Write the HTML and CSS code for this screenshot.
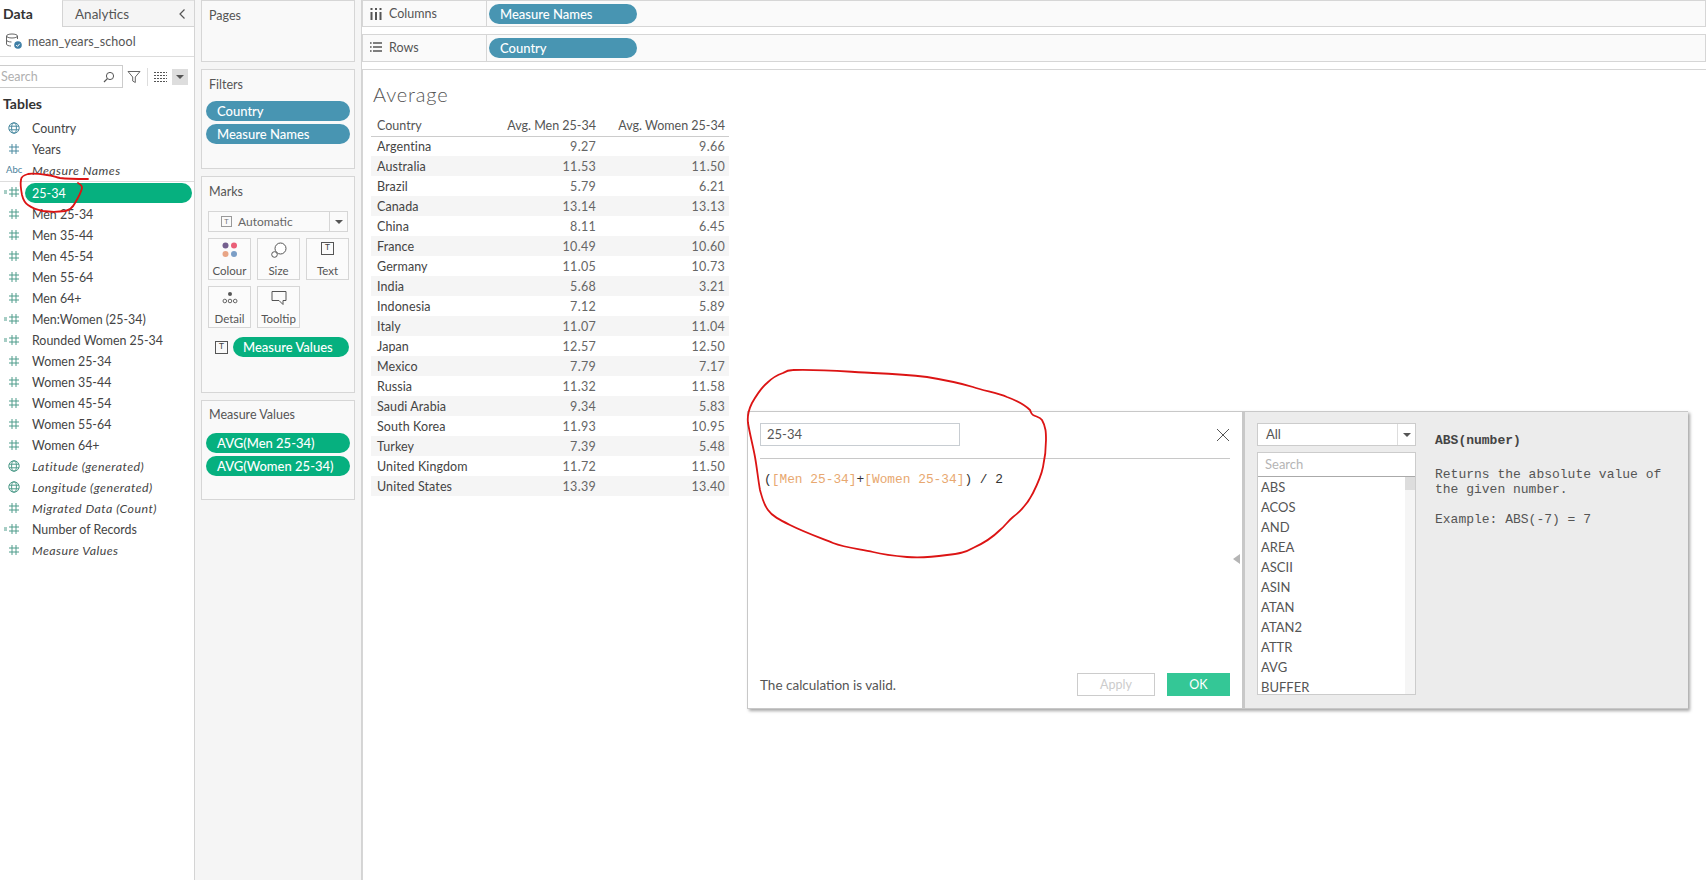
FILE: index.html
```html
<!DOCTYPE html>
<html lang="en">
<head>
  <meta charset="UTF-8" />
  <title>Average</title>
  <link rel="stylesheet" href="styles.css">
</head>
<body>
  <svg class="defs" width="0" height="0">
    <symbol id="hash" viewBox="0 0 12 12">
      <path d="M4 1v10M8 1v10M1 4h10M1 8h10" fill="none" stroke="currentColor" stroke-width="1"/>
    </symbol>
    <symbol id="calc" viewBox="0 0 16 12">
      <path d="M8 1v10M12 1v10M5 4h10M5 8h10" fill="none" stroke="currentColor" stroke-width="1"/>
      <path d="M0 5h3M0 7h3" fill="none" stroke="currentColor" stroke-width="1"/>
    </symbol>
    <symbol id="globe" viewBox="0 0 12 12">
      <g fill="none" stroke="currentColor" stroke-width="1">
        <circle cx="6" cy="6" r="5.2"/>
        <ellipse cx="6" cy="6" rx="2.4" ry="5.2"/>
        <path d="M1 4.2h10M1 7.8h10"/>
      </g>
    </symbol>
  </svg>

  <div class="page">
    <aside class="sidebar">
      <div class="tabs">
        <div class="tab active">Data</div>
        <div class="tab">Analytics<span class="chev">
          <svg width="8" height="12" viewBox="0 0 8 12"><path d="M6.5 1.5L2 6l4.5 4.5" fill="none" stroke="#555" stroke-width="1.2"/></svg>
        </span></div>
      </div>
      <div class="source">
        <svg width="18" height="17" viewBox="0 0 18 17">
          <g fill="none" stroke="#666" stroke-width="1">
            <ellipse cx="7" cy="3" rx="5.5" ry="2"/>
            <path d="M1.5 3v8c0 1.2 2 2 4.5 2M12.5 3v3M1.5 7c0 1.2 2.5 2 5 2"/>
          </g>
          <circle cx="13" cy="12" r="3.8" fill="#3f7fa6"/>
          <path d="M11.2 12l1.3 1.4 2.2-2.6" fill="none" stroke="#fff" stroke-width="1"/>
        </svg>
        <span>mean_years_school</span>
      </div>
      <div class="tools">
        <div class="search">
          <span>Search</span>
          <svg width="12" height="12" viewBox="0 0 12 12"><circle cx="7" cy="5" r="3.6" fill="none" stroke="#555"/><path d="M4.4 7.6L1 11" stroke="#555" stroke-width="1.2"/></svg>
        </div>
        <svg class="funnel" width="14" height="14" viewBox="0 0 14 14"><path d="M1 1.5h12L8.3 7v5.5L5.7 11V7z" fill="none" stroke="#666"/></svg>
        <span class="tool-sep"></span>
        <svg class="view-grid" width="13" height="10" viewBox="0 0 13 10"><path d="M0 .5h13M0 3.5h13M0 6.5h13M0 9.5h13" stroke="#555" stroke-dasharray="2 1"/></svg>
        <span class="tool-drop"><i class="caret"></i></span>
      </div>
      <h3 class="tables-title">Tables</h3>
      <ul class="fields">
        <li><svg class="ico blue"><use href="#globe"/></svg>Country</li>
        <li><svg class="ico blue"><use href="#hash"/></svg>Years</li>
        <li class="it"><span class="abc">Abc</span>Measure Names</li>
        <li class="selected"><svg class="ico-calc"><use href="#calc"/></svg><span class="field-pill">25-34</span></li>
        <li><svg class="ico"><use href="#hash"/></svg>Men 25-34</li>
        <li><svg class="ico"><use href="#hash"/></svg>Men 35-44</li>
        <li><svg class="ico"><use href="#hash"/></svg>Men 45-54</li>
        <li><svg class="ico"><use href="#hash"/></svg>Men 55-64</li>
        <li><svg class="ico"><use href="#hash"/></svg>Men 64+</li>
        <li><svg class="ico-calc"><use href="#calc"/></svg>Men:Women (25-34)</li>
        <li><svg class="ico-calc"><use href="#calc"/></svg>Rounded Women 25-34</li>
        <li><svg class="ico"><use href="#hash"/></svg>Women 25-34</li>
        <li><svg class="ico"><use href="#hash"/></svg>Women 35-44</li>
        <li><svg class="ico"><use href="#hash"/></svg>Women 45-54</li>
        <li><svg class="ico"><use href="#hash"/></svg>Women 55-64</li>
        <li><svg class="ico"><use href="#hash"/></svg>Women 64+</li>
        <li class="it"><svg class="ico"><use href="#globe"/></svg>Latitude (generated)</li>
        <li class="it"><svg class="ico"><use href="#globe"/></svg>Longitude (generated)</li>
        <li class="it"><svg class="ico"><use href="#hash"/></svg>Migrated Data (Count)</li>
        <li><svg class="ico-calc"><use href="#calc"/></svg>Number of Records</li>
        <li class="it"><svg class="ico"><use href="#hash"/></svg>Measure Values</li>
      </ul>
    </aside>

    <section class="cards">
      <div class="card pages"><h4>Pages</h4></div>
      <div class="card filters">
        <h4>Filters</h4>
        <div class="pill blue-pill">Country</div>
        <div class="pill blue-pill">Measure Names</div>
      </div>
      <div class="card marks">
        <h4>Marks</h4>
        <div class="mark-select">
          <span class="t-icon faint">T</span>
          <span class="mark-type">Automatic</span>
          <span class="mark-drop"><i class="caret"></i></span>
        </div>
        <div class="mark-grid">
          <div class="mark-btn">
            <svg width="16" height="16" viewBox="0 0 16 16"><circle cx="3.5" cy="3.5" r="3" fill="#75608f"/><circle cx="12" cy="3.5" r="3" fill="#ea5f78"/><circle cx="3.5" cy="12" r="3" fill="#e8a586"/><circle cx="12" cy="12" r="3" fill="#7b9ec6"/></svg>
            <span>Colour</span>
          </div>
          <div class="mark-btn">
            <svg width="16" height="16" viewBox="0 0 16 16"><circle cx="9.5" cy="6.5" r="5.5" fill="#fff" stroke="#555"/><circle cx="3.5" cy="12.5" r="2.8" fill="#fff" stroke="#555"/></svg>
            <span>Size</span>
          </div>
          <div class="mark-btn">
            <span class="t-icon">T</span>
            <span>Text</span>
          </div>
          <div class="mark-btn">
            <svg width="16" height="16" viewBox="0 0 16 16"><circle cx="8" cy="4" r="2" fill="#555"/><g fill="none" stroke="#555" stroke-width=".9"><circle cx="2.8" cy="11" r="1.8"/><circle cx="8" cy="11" r="1.8"/><circle cx="13.2" cy="11" r="1.8"/></g></svg>
            <span>Detail</span>
          </div>
          <div class="mark-btn">
            <svg width="16" height="16" viewBox="0 0 16 16"><path d="M1 1.5h14v9h-3v4l-4-4H1z" fill="none" stroke="#555"/></svg>
            <span>Tooltip</span>
          </div>
        </div>
        <div class="mark-field">
          <span class="t-icon">T</span>
          <div class="pill green-pill centered">Measure Values</div>
        </div>
      </div>
      <div class="card values">
        <h4>Measure Values</h4>
        <div class="pill green-pill">AVG(Men 25-34)</div>
        <div class="pill green-pill">AVG(Women 25-34)</div>
      </div>
    </section>

    <main class="main">
      <div class="shelf">
        <div class="shelf-label">
          <svg width="12" height="12" viewBox="0 0 12 12"><path d="M1.5 4v8M6 4v8M10.5 4v8" stroke="#555" stroke-width="2"/><path d="M1.5 0v2M6 0v2M10.5 0v2" stroke="#555" stroke-width="2"/></svg>
          Columns
        </div>
        <div class="pill blue-pill shelf-pill">Measure Names</div>
      </div>
      <div class="shelf">
        <div class="shelf-label">
          <svg width="12" height="12" viewBox="0 0 12 12"><path d="M3 2h9M3 6h9M3 10h9M0 2h1.6M0 6h1.6M0 10h1.6" stroke="#555" stroke-width="1.6"/></svg>
          Rows
        </div>
        <div class="pill blue-pill shelf-pill">Country</div>
      </div>
      <div class="view">
        <h1>Average</h1>
        <table class="crosstab">
          <thead>
            <tr><th>Country</th><th>Avg. Men 25-34</th><th>Avg. Women 25-34</th></tr>
          </thead>
          <tbody>
            <tr><td>Argentina</td><td>9.27</td><td>9.66</td></tr>
            <tr><td>Australia</td><td>11.53</td><td>11.50</td></tr>
            <tr><td>Brazil</td><td>5.79</td><td>6.21</td></tr>
            <tr><td>Canada</td><td>13.14</td><td>13.13</td></tr>
            <tr><td>China</td><td>8.11</td><td>6.45</td></tr>
            <tr><td>France</td><td>10.49</td><td>10.60</td></tr>
            <tr><td>Germany</td><td>11.05</td><td>10.73</td></tr>
            <tr><td>India</td><td>5.68</td><td>3.21</td></tr>
            <tr><td>Indonesia</td><td>7.12</td><td>5.89</td></tr>
            <tr><td>Italy</td><td>11.07</td><td>11.04</td></tr>
            <tr><td>Japan</td><td>12.57</td><td>12.50</td></tr>
            <tr><td>Mexico</td><td>7.79</td><td>7.17</td></tr>
            <tr><td>Russia</td><td>11.32</td><td>11.58</td></tr>
            <tr><td>Saudi Arabia</td><td>9.34</td><td>5.83</td></tr>
            <tr><td>South Korea</td><td>11.93</td><td>10.95</td></tr>
            <tr><td>Turkey</td><td>7.39</td><td>5.48</td></tr>
            <tr><td>United Kingdom</td><td>11.72</td><td>11.50</td></tr>
            <tr><td>United States</td><td>13.39</td><td>13.40</td></tr>
          </tbody>
        </table>
      </div>
    </main>

    <div class="calc-dialog">
      <div class="calc-left">
        <div class="calc-head">
          <div class="calc-name">25-34</div>
          <svg class="calc-close" width="14" height="14" viewBox="0 0 14 14"><path d="M1 1l12 12M13 1L1 13" stroke="#555" stroke-width="1"/></svg>
        </div>
        <div class="formula">(<span class="ref">[Men 25-34]</span>+<span class="ref">[Women 25-34]</span>) / 2</div>
        <div class="calc-foot">
          <span class="valid">The calculation is valid.</span>
          <button class="btn-apply">Apply</button>
          <button class="btn-ok">OK</button>
        </div>
        <i class="collapse"></i>
      </div>
      <div class="calc-right">
        <div class="fn-col">
          <div class="fn-select">All<span class="fn-drop"><i class="caret"></i></span></div>
          <div class="fn-box">
            <div class="fn-search">Search</div>
            <div class="fn-listwrap">
              <ul class="fn-list">
                <li>ABS</li>
                <li>ACOS</li>
                <li>AND</li>
                <li>AREA</li>
                <li>ASCII</li>
                <li>ASIN</li>
                <li>ATAN</li>
                <li>ATAN2</li>
                <li>ATTR</li>
                <li>AVG</li>
                <li>BUFFER</li>
              </ul>
              <div class="fn-track"><div class="fn-thumb"></div></div>
            </div>
          </div>
        </div>
        <div class="fn-help">
          <p class="fn-sig">ABS(number)</p>
          <p>Returns the absolute value of<br>the given number.</p>
          <p>Example: ABS(-7) = 7</p>
        </div>
      </div>
    </div>

    <!-- hand drawn red marks on top of the screenshot -->
    <svg class="scribble" width="1706" height="880" viewBox="0 0 1706 880">
      <g fill="none" stroke="#dc1414" stroke-width="1.8" stroke-linecap="round" stroke-linejoin="round">
        <path d="M793 370C820 369 850 372 873 373C895 374 910 375 927 377C945 380 960 383 973 387C985 391 997 393 1007 397C1018 401 1025 405 1030 410C1031 412 1031 414 1033 415C1037 417 1040 417 1042 420C1046 427 1046 433 1046 440C1046 450 1045 458 1043 467C1041 477 1037 485 1033 493C1028 503 1021 511 1013 517C1008 521 1005 526 1000 530C992 538 982 544 973 548C965 553 956 554 947 555C933 557 920 558 907 557C895 556 885 555 873 552C860 549 846 548 833 543C818 537 804 532 790 525C780 520 772 516 768 510C763 503 762 497 760 490C758 479 757 468 755 457C753 446 750 435 748 423C747 415 749 409 752 403C756 396 761 388 767 383C772 378 777 375 783 373C786 371 790 370 793 370"/>
        <path d="M88 179C78 179 68 179 60 178C55 177 52 175 47 175C40 174 33 173 28 174C24 175 21 177 21 180C20 185 21 190 22 195C23 199 25 203 28 205C32 208 38 210 43 211C50 212 58 212 65 211C70 210 73 207 75 203C78 198 81 193 82 188C82 186 80 184 78 183"/>
      </g>
    </svg>
  </div>
</body>
</html>
```

FILE: styles.css
```css
* {
  box-sizing: border-box;
}
body {
  margin: 0;
  font-family: Lato, "Open Sans", sans-serif;
  font-size: 13px;
  color: #444;
  background: #fff;
}
.defs {
  position: absolute;
}
ul {
  list-style: none;
  margin: 0;
  padding: 0;
}
.page {
  position: relative;
  display: flex;
  width: 1706px;
  height: 880px;
  overflow: hidden;
}
.caret {
  display: block;
  width: 0;
  height: 0;
  border-left: 4px solid transparent;
  border-right: 4px solid transparent;
  border-top: 4px solid #555;
}

/* data pane */
.sidebar {
  width: 195px;
  flex: none;
  border-right: 1px solid #d4d4d4;
}
.tabs {
  display: flex;
  height: 27px;
}
.tab {
  display: flex;
  align-items: center;
  padding-left: 12px;
  flex: 1;
  font-size: 13.5px;
  color: #555;
  background: #f5f5f5;
  border-left: 1px solid #d4d4d4;
  border-bottom: 1px solid #d4d4d4;
  border-top: 1px solid #e0e0e0;
}
.tab.active {
  flex: none;
  width: 62px;
  padding-left: 3px;
  font-size: 14px;
  font-weight: 700;
  color: #333;
  background: #fff;
  border: 0;
}
.chev {
  margin-left: auto;
  margin-right: 8px;
  display: flex;
}
.source {
  display: flex;
  align-items: center;
  gap: 5px;
  height: 30px;
  padding-left: 5px;
  border-bottom: 1px solid #ddd;
  font-size: 12.5px;
  letter-spacing: .1px;
  color: #555;
}
.tools {
  display: flex;
  align-items: center;
  height: 23px;
  margin-top: 8px;
}
.search {
  display: flex;
  align-items: center;
  justify-content: space-between;
  width: 123px;
  height: 23px;
  padding: 0 7px 0 1px;
  border: 1px solid #ccc;
  border-left: 0;
  color: #b0b0b0;
  font-size: 12.5px;
}
.funnel {
  margin-left: 4px;
}
.tool-sep {
  width: 1px;
  height: 18px;
  margin-left: 6px;
  background: #ddd;
}
.view-grid {
  margin-left: 6px;
}
.tool-drop {
  display: flex;
  align-items: center;
  justify-content: center;
  width: 16px;
  height: 16px;
  margin-left: 5px;
  background: #ddd;
}
.tables-title {
  margin: 4px 0 0;
  padding-left: 3px;
  height: 26px;
  line-height: 24px;
  font-size: 14px;
  font-weight: 700;
  color: #333;
}
.fields li {
  position: relative;
  display: flex;
  align-items: center;
  height: 21px;
  padding-left: 32px;
  font-size: 12.4px;
  color: #444;
}
.fields li.it {
  font-style: italic;
  letter-spacing: .45px;
}
.fields li.selected {
  height: 23px;
  border-top: 1px solid #ddd;
  padding-left: 25px;
}
.ico,
.ico-calc,
.abc {
  position: absolute;
  color: #4f9c8b;
}
.ico {
  left: 8px;
  top: 4px;
  width: 12px;
  height: 12px;
}
.ico.blue {
  color: #4a8aa0;
}
.ico-calc {
  left: 4px;
  top: 4px;
  width: 16px;
  height: 12px;
}
.abc {
  left: 6px;
  top: 4px;
  font-size: 9.5px;
  font-style: normal;
  letter-spacing: 0;
  color: #4a7f9b;
}
.field-pill {
  display: flex;
  align-items: center;
  width: 167px;
  height: 20px;
  padding-left: 7px;
  border-radius: 10px;
  color: #fff;
  background: #06b07f;
  font-size: 12.5px;
}

/* shelf cards */
.cards {
  width: 167px;
  flex: none;
  display: flex;
  flex-direction: column;
  gap: 7px;
  padding: 0 6px;
  background: #f5f5f5;
  border-right: 1px solid #d4d4d4;
}
.card {
  border: 1px solid #d6d6d6;
  background: #f9f9f9;
  padding: 0 4px;
}
.card h4 {
  margin: 0;
  padding-left: 3px;
  font-size: 12.5px;
  font-weight: 400;
  color: #555;
}
.pages {
  height: 62px;
  padding-top: 7px;
}
.filters {
  height: 100px;
}
.filters h4 {
  height: 31px;
  line-height: 16px;
  padding-top: 7px;
}
.marks {
  height: 217px;
}
.marks h4 {
  height: 34px;
  padding-top: 7px;
}
.values {
  height: 100px;
}
.values h4 {
  height: 32px;
  padding-top: 6px;
}
.pill {
  display: flex;
  align-items: center;
  height: 20px;
  padding-left: 11px;
  margin-bottom: 3px;
  border-radius: 10px;
  color: #fff;
  font-size: 13px;
  font-weight: 500;
}
.blue-pill {
  background: #4895b2;
}
.green-pill {
  background: #06b07f;
}
.pill.centered {
  flex: 1;
  margin: 0;
}
.mark-select {
  display: flex;
  align-items: center;
  height: 21px;
  margin: 0 2px;
  padding-left: 12px;
  border: 1px solid #d6d6d6;
  background: #fafafa;
  color: #666;
  font-size: 12px;
}
.mark-type {
  margin-left: 6px;
}
.mark-drop {
  display: flex;
  align-items: center;
  justify-content: center;
  width: 18px;
  height: 100%;
  margin-left: auto;
  border-left: 1px solid #d6d6d6;
}
.t-icon {
  display: inline-block;
  flex: none;
  width: 13px;
  height: 13px;
  line-height: 11px;
  text-align: center;
  font-family: "Liberation Mono", monospace;
  font-size: 9px;
  color: #444;
  border: 1px solid #555;
}
.t-icon.faint {
  color: #777;
  border-color: #999;
  width: 11px;
  height: 11px;
  line-height: 9px;
  font-size: 8px;
}
.mark-grid {
  display: grid;
  grid-template-columns: repeat(3, 43px);
  grid-auto-rows: 42px;
  gap: 6px 6px;
  margin: 6px 2px 0;
}
.mark-btn {
  display: flex;
  flex-direction: column;
  align-items: center;
  justify-content: space-between;
  padding: 3px 0 2px;
  border: 1px solid #d6d6d6;
  background: #fbfbfb;
  font-size: 11.5px;
  color: #555;
}
.mark-field {
  display: flex;
  align-items: center;
  gap: 5px;
  margin: 9px 0 0 9px;
  padding-right: 1px;
}
.mark-field .pill {
  padding-left: 10px;
}

/* main view */
.main {
  flex: 1;
  display: flex;
  flex-direction: column;
  gap: 7px;
}
.shelf {
  display: flex;
  align-items: center;
  height: 27px;
  border: 1px solid #d6d6d6;
  background: #fafafa;
}
.shelf + .shelf {
  height: 28px;
}
.shelf-label {
  display: flex;
  align-items: center;
  gap: 7px;
  width: 124px;
  height: 100%;
  padding-left: 7px;
  border-right: 1px solid #d6d6d6;
  font-size: 12.5px;
  color: #555;
}
.shelf + .shelf .shelf-label {
  padding-bottom: 2px;
}
.shelf-pill {
  width: 148px;
  margin: 0 0 0 2px;
}
.view {
  flex: 1;
  padding: 0 0 0 8px;
  border: 1px solid #d6d6d6;
  border-right: 0;
  border-bottom: 0;
}
.view h1 {
  margin: 10px 0 0 2px;
  height: 30px;
  line-height: 28px;
  font-size: 20px;
  font-weight: 300;
  letter-spacing: .85px;
  color: #555;
}
.crosstab {
  margin-top: 5px;
  width: 358px;
  border-collapse: collapse;
  table-layout: fixed;
  font-size: 12.5px;
}
.crosstab th {
  height: 21px;
  padding: 0 4px 0 6px;
  font-weight: 400;
  text-align: right;
  color: #555;
  border-bottom: 1px solid #ccc;
}
.crosstab th:nth-child(1) {
  width: 110px;
  text-align: left;
}
.crosstab th:nth-child(2) {
  width: 119px;
}
.crosstab td {
  height: 20px;
  padding: 0 4px 0 6px;
  text-align: right;
  color: #666;
  letter-spacing: .3px;
}
.crosstab td:first-child {
  text-align: left;
  color: #444;
  letter-spacing: .1px;
}
.crosstab tbody tr:nth-child(even) {
  background: #f5f5f5;
}

/* calculation editor */
.calc-dialog {
  position: absolute;
  left: 747px;
  top: 411px;
  display: flex;
  width: 941px;
  height: 298px;
  background: #fff;
  border: 1px solid #c8c8c8;
  border-right: 0;
  box-shadow: 2px 2px 3px rgba(0, 0, 0, .35);
}
.calc-left {
  position: relative;
  display: flex;
  flex-direction: column;
  width: 497px;
  padding: 12px 12px 12px 12px;
  border-right: 3px solid #c8c8c8;
}
.calc-head {
  display: flex;
  align-items: center;
  justify-content: space-between;
  height: 35px;
  padding: 0 0 13px;
  border-bottom: 1px solid #c8c8c8;
}
.calc-name {
  width: 200px;
  height: 23px;
  line-height: 21px;
  padding-left: 6px;
  border: 1px solid #c8cdd2;
  font-size: 13px;
  color: #555;
}
.formula {
  margin: 13px 0 0 4px;
  font-family: "Liberation Mono", monospace;
  font-size: 12.85px;
  line-height: 16px;
  color: #333;
}
.ref {
  color: #e8a870;
}
.calc-foot {
  display: flex;
  align-items: center;
  margin-top: auto;
}
.valid {
  font-size: 13.5px;
  color: #555;
  margin-right: auto;
}
.btn-apply,
.btn-ok {
  height: 23px;
  padding: 0;
  font-family: inherit;
  font-size: 12.5px;
}
.btn-apply {
  width: 78px;
  margin-right: 12px;
  background: #fff;
  color: #ccc;
  border: 1px solid #ccc;
}
.btn-ok {
  width: 63px;
  color: #fff;
  background: #34c796;
  border: 0;
}
.collapse {
  position: absolute;
  right: 2px;
  top: 142px;
  width: 0;
  height: 0;
  border-top: 5px solid transparent;
  border-bottom: 5px solid transparent;
  border-right: 7px solid #b5b5b5;
}
.calc-right {
  flex: 1;
  display: flex;
  padding: 11px 0 0 12px;
  background: #ececec;
}
.fn-col {
  width: 159px;
  flex: none;
}
.fn-select {
  position: relative;
  height: 23px;
  line-height: 21px;
  padding-left: 8px;
  background: #fff;
  border: 1px solid #ccc;
  font-size: 13px;
  color: #555;
}
.fn-drop {
  position: absolute;
  right: 0;
  top: 0;
  bottom: 0;
  width: 18px;
  display: flex;
  align-items: center;
  justify-content: center;
  border-left: 1px solid #ddd;
}
.fn-box {
  margin-top: 6px;
  height: 243px;
  background: #fff;
  border: 1px solid #ccc;
}
.fn-search {
  height: 24px;
  line-height: 23px;
  padding-left: 7px;
  border-bottom: 1px solid #aaa;
  color: #b5b5b5;
  font-size: 13px;
}
.fn-listwrap {
  display: flex;
  height: 217px;
  overflow: hidden;
}
.fn-list {
  flex: 1;
  padding-left: 3px;
}
.fn-list li {
  height: 20px;
  line-height: 20px;
  font-size: 13px;
  color: #555;
}
.fn-track {
  width: 10px;
  background: #f5f5f5;
}
.fn-thumb {
  height: 13px;
  background: #ddd;
}
.fn-help {
  padding: 10px 0 0 19px;
  font-family: "Liberation Mono", monospace;
  font-size: 13px;
  line-height: 15px;
  color: #555;
}
.fn-help p {
  margin: 0 0 15px;
}
.fn-help .fn-sig {
  margin-bottom: 19px;
  font-weight: 700;
  color: #444;
}
.scribble {
  position: absolute;
  left: 0;
  top: 0;
  pointer-events: none;
}
```
